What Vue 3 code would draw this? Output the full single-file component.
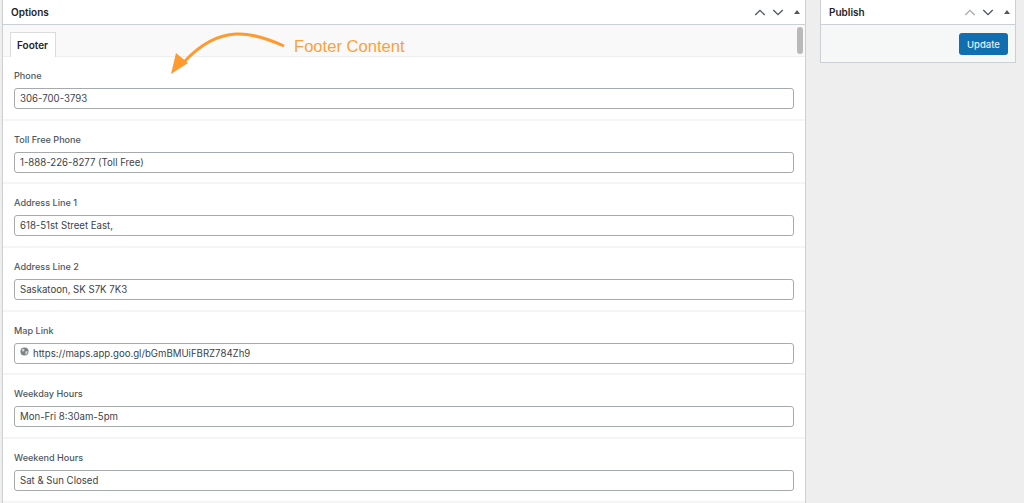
<template>
  <div class="page">
    <section class="panel options">
      <header class="panel-head">
        <h2 class="panel-title">Options</h2>
        <div class="head-tools">
          <svg class="tool" viewBox="0 0 14 8" width="12" height="7"><path d="M1.5 7 7 1.5 12.500 7" /></svg>
          <svg class="tool" viewBox="0 0 14 8" width="12" height="7"><path d="M1.5 1 7 6.500 12.500 1" /></svg>
          <span class="caret"></span>
        </div>
      </header>
      <div class="tab-strip">
        <div class="tab">Footer</div>
      </div>
      <div class="field" v-for="field in fields" :key="field.label">
        <label class="field-label">{{ field.label }}</label>
        <div class="input">
          <svg v-if="field.globe" class="globe" viewBox="0 0 10 10" width="9" height="9">
            <circle cx="5" cy="5" r="4.500" fill="#7d8287" />
            <path d="M2 2.500 4.500 2 5 4 3 5.500ZM6 5 8.500 4.500 8 7.500 6 8.500Z" fill="#d5d7d9" />
          </svg>
          <span>{{ field.value }}</span>
        </div>
      </div>
      <div class="scroll-thumb"></div>
      <svg class="arrow" viewBox="0 0 130 50" width="130" height="50">
        <path d="M114 18C96 10 80 5 66 6 46 7 30 17 15 33" fill="none" stroke="#ff9a2e" stroke-width="3" />
        <path d="M1 46 6 25 18 35Z" fill="#ff9a2e" />
      </svg>
      <span class="note">Footer Content</span>
    </section>
    <aside class="panel publish">
      <header class="panel-head">
        <h2 class="panel-title">Publish</h2>
        <div class="head-tools">
          <svg class="tool faded" viewBox="0 0 14 8" width="12" height="7"><path d="M1.5 7 7 1.5 12.500 7" /></svg>
          <svg class="tool" viewBox="0 0 14 8" width="12" height="7"><path d="M1.5 1 7 6.500 12.500 1" /></svg>
          <span class="caret"></span>
        </div>
      </header>
      <div class="publish-body">
        <button class="update">Update</button>
      </div>
    </aside>
  </div>
</template>

<script setup>
const fields = [
  { label: 'Phone', value: '306-700-3793' },
  { label: 'Toll Free Phone', value: '1-888-226-8277 (Toll Free)' },
  { label: 'Address Line 1', value: '618-51st Street East,' },
  { label: 'Address Line 2', value: 'Saskatoon, SK S7K 7K3' },
  { label: 'Map Link', value: 'https://maps.app.goo.gl/bGmBMUiFBRZ784Zh9', globe: true },
  { label: 'Weekday Hours', value: 'Mon-Fri 8:30am-5pm' },
  { label: 'Weekend Hours', value: 'Sat & Sun Closed' }
];
</script>

<style>
html,
body {
  margin: 0;
  background: #eeeeee;
}
</style>

<style scoped>
.page {
  display: flex;
  align-items: flex-start;
  gap: 14px;
  height: 503px;
  padding-left: 2px;
  overflow: hidden;
  font-family: Inter, "Liberation Sans", sans-serif;
  color: #2c3338;
}
.panel {
  box-sizing: border-box;
  background: #fff;
  border: 1px solid #ccd0d4;
  border-top: 0;
}
.options {
  position: relative;
  flex: none;
  width: 804px;
  height: 504px;
}
.publish {
  flex: none;
  width: 196px;
}
.panel-head {
  display: flex;
  align-items: center;
  justify-content: space-between;
  box-sizing: border-box;
  height: 25px;
  border-bottom: 1px solid #ccd0d4;
  padding: 0 5px 0 8px;
}
.panel-title {
  margin: 0;
  font-size: 10px;
  font-weight: 600;
  color: #1d2327;
}
.head-tools {
  display: flex;
  align-items: center;
  gap: 6px;
}
.tool {
  fill: none;
  stroke: #50575e;
  stroke-width: 1.6;
}
.tool.faded {
  stroke: #a7aaad;
}
.caret {
  width: 0;
  height: 0;
  margin-left: 4px;
  border-left: 3px solid transparent;
  border-right: 3px solid transparent;
  border-bottom: 4px solid #50575e;
}
.tab-strip {
  display: flex;
  box-sizing: border-box;
  height: 32px;
  padding: 7px 0 0 7px;
  background: #f9f9f9;
  border-bottom: 1px solid #eeeeee;
}
.tab {
  box-sizing: border-box;
  height: 25px;
  margin-bottom: -1px;
  padding: 0 7px 0 6px;
  line-height: 24px;
  font-size: 10px;
  font-weight: 600;
  color: #1d2327;
  background: #fff;
  border: 1px solid #dcdcde;
  border-bottom: 0;
}
.field {
  box-sizing: border-box;
  height: 63.67px;
  padding: 12px 11px 0 11px;
  border-bottom: 2px solid #f5f5f5;
}
.field-label {
  display: block;
  height: 19px;
  line-height: 14px;
  font-size: 9.1px;
  font-weight: 500;
  color: #50575e;
}
.input {
  display: flex;
  align-items: center;
  gap: 4px;
  box-sizing: border-box;
  height: 21px;
  padding: 0 5px;
  font-size: 9.65px;
  color: #3c434a;
  background: #fff;
  border: 1px solid #a7aaad;
  border-radius: 3px;
}
.globe {
  flex: none;
  margin-top: -3px;
}
.scroll-thumb {
  position: absolute;
  top: 27px;
  right: 2px;
  width: 6px;
  height: 27px;
  border-radius: 3px;
  background: #b9b9b9;
}
.arrow {
  position: absolute;
  left: 167px;
  top: 28px;
}
.note {
  position: absolute;
  left: 291px;
  top: 37px;
  font-family: "Liberation Sans", sans-serif;
  font-size: 16.6px;
  line-height: 19px;
  color: #ff9f3a;
}
.publish-body {
  display: flex;
  justify-content: flex-end;
  padding: 8px 7px 7px 0;
  background: #f6f7f7;
}
.update {
  box-sizing: border-box;
  width: 49px;
  height: 22px;
  padding: 0;
  font-family: inherit;
  font-size: 9.5px;
  font-weight: 500;
  color: #e6f1f8;
  background: #0f6fb0;
  border: 0;
  border-radius: 3px;
}
</style>
